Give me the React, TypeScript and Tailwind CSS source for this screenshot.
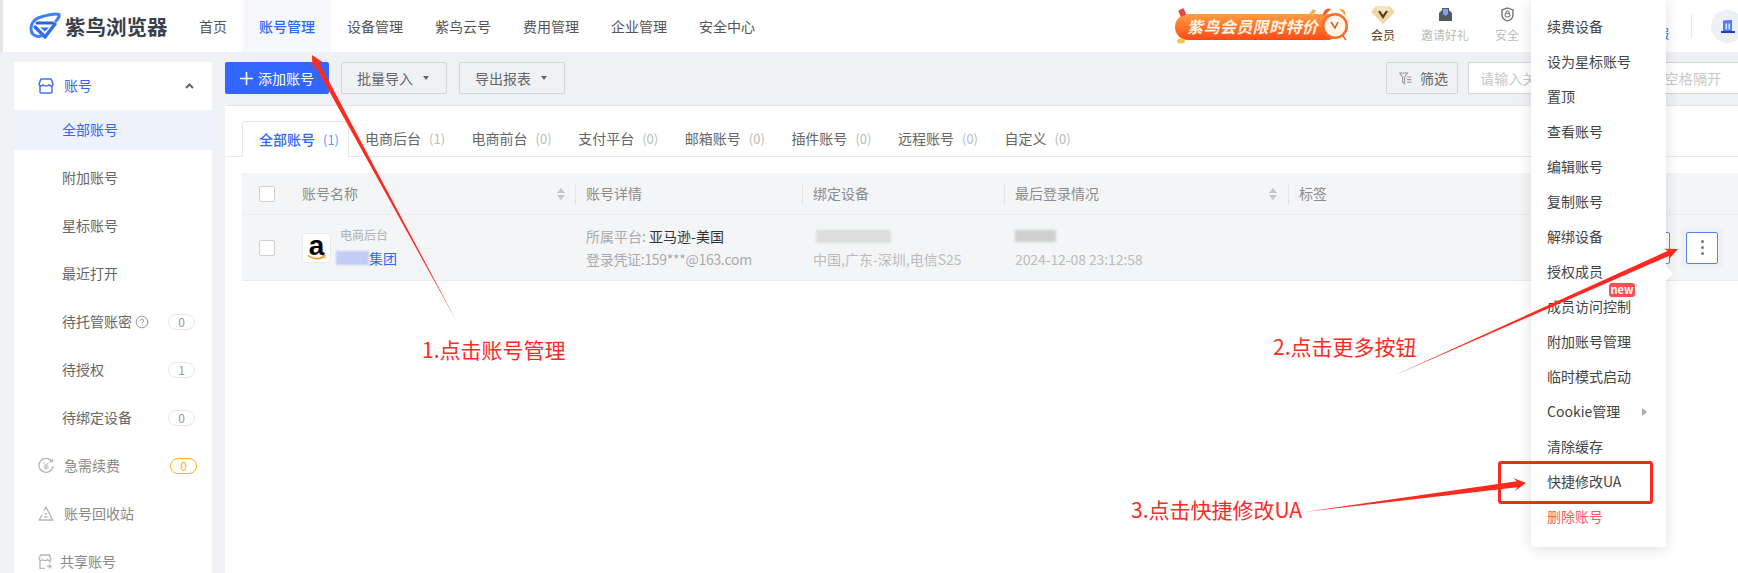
import React from "react";
import { CircleHelp } from "lucide-react";

const FONT = { fontFamily: '"Noto Sans CJK SC", "Noto Sans", sans-serif' };

function Logo() {
  return (
    <svg width="32" height="28" viewBox="0 0 32 28" fill="none" className="shrink-0">
      <path d="M3 21C0 14 4 7 12 5C19 3 26 1 30 2.5C31 5 29 7 27 9" stroke="#3b82f6" strokeWidth="3" strokeLinecap="round" />
      <path d="M8 11H24" stroke="#2563eb" strokeWidth="3" strokeLinecap="round" />
      <path d="M6 15L16 25L26 12" stroke="#2f6bf5" strokeWidth="3.4" strokeLinejoin="round" strokeLinecap="round" />
      <path d="M11 15.5H20L16 19.5Z" fill="#2f6bf5" />
      <path d="M3 21C5 24 9 25 12 24" stroke="#3b82f6" strokeWidth="3" strokeLinecap="round" />
    </svg>
  );
}

function Banner() {
  return (
    <div className="relative w-[177px] h-[34px] mt-[-1px] shrink-0">
      <svg width="177" height="42" viewBox="0 0 177 42" className="absolute left-0 top-[-4px]">
        <defs>
          <linearGradient id="pill" x1="0" y1="0" x2="0" y2="1">
            <stop offset="0" stopColor="#ff9d42" />
            <stop offset="1" stopColor="#ff4a17" />
          </linearGradient>
        </defs>
        <rect x="0" y="9" width="165" height="26" rx="13" fill="url(#pill)" />
        <rect x="4" y="4" width="6" height="7" rx="1" fill="#ef4444" transform="rotate(-25 7 7)" />
        <ellipse cx="6" cy="36" rx="4" ry="2.5" fill="#f8c34a" />
        <path d="M134 9l4-5 3 2-4 5z" fill="#f3b25a" />
        <path d="M148 9a6 6 0 0 1 8-5l-7 7z" fill="#ff5a26" />
        <path d="M171 10a6 6 0 0 0-7-6l7 7z" fill="#f7a92e" />
        <path d="M152 31l-3 4M168 31l3 4" stroke="#e8622a" strokeWidth="1.6" />
        <circle cx="160" cy="21" r="13" fill="#ff6a2a" />
        <circle cx="160" cy="21" r="10.5" fill="#fff6e8" />
        <path d="M156 17l4 6 3-6" stroke="#d9592a" strokeWidth="1.6" fill="none" />
      </svg>
      <span className="absolute left-[12px] top-[4px] text-[16px] leading-[26px] font-bold italic text-[#fff3df] tracking-[0.4px] whitespace-nowrap">
        紫鸟会员限时特价
      </span>
    </div>
  );
}

function HeaderIcon({ label, cls, width, children }: { label: string; cls: string; width: string; children: React.ReactNode }) {
  return (
    <div className={`flex flex-col items-center shrink-0 mb-[7px] ${width}`}>
      <div className="h-[24px] flex items-center justify-center">{children}</div>
      <span className={`text-[12px] leading-[16px] whitespace-nowrap ${cls}`}>{label}</span>
    </div>
  );
}

function Header() {
  const nav = ["首页", "账号管理", "设备管理", "紫鸟云号", "费用管理", "企业管理", "安全中心"];
  return (
    <header className="h-[52px] shrink-0 bg-white border-l-[3px] border-[#e6e6e6] flex items-stretch">
      <div className="flex items-center pl-[26px] w-[180px] shrink-0">
        <Logo />
        <span className="ml-[4px] text-[20.5px] leading-none font-bold text-[#3a3f4b] whitespace-nowrap">紫鸟浏览器</span>
      </div>
      <nav className="flex items-stretch">
        {nav.map((n, i) => (
          <div
            key={n}
            className={`px-4 flex items-center text-[14px] whitespace-nowrap ${i === 1 ? "bg-[#f7f8fc] text-[#3366ff] font-medium" : "text-[#555]"}`}
          >
            {n}
          </div>
        ))}
      </nav>
      <div className="ml-auto mr-[-6px] flex items-center shrink-0">
        <Banner />
        <div className="ml-[19px]">
          <HeaderIcon label="会员" cls="text-[#5a3a12]" width="w-[24px]">
            <svg width="24" height="18" viewBox="0 0 24 18">
              <path d="M5 0H19L24 6L12 18L0 6Z" fill="#efd7a8" />
              <path d="M5 0H19L17 6H7Z" fill="#f7e6c6" />
              <path d="M8 5L12 11L16 5" stroke="#5a3a12" strokeWidth="2.2" fill="none" />
            </svg>
          </HeaderIcon>
        </div>
        <div className="ml-[26px]">
          <HeaderIcon label="邀请好礼" cls="text-[#bbb]" width="w-[48px]">
            <svg width="15" height="15" viewBox="0 0 15 15">
              <path d="M1 6L4 3V1H11V3L14 6V14H1Z" fill="#555962" />
              <path d="M5 2H10V7L7.5 9L5 7Z" fill="#7d9dff" />
            </svg>
          </HeaderIcon>
        </div>
        <div className="ml-[26px]">
          <HeaderIcon label="安全" cls="text-[#bbb]" width="w-[24px]">
            <svg width="13" height="15" viewBox="0 0 13 15" fill="none">
              <path d="M6.5 1L12 3V8C12 11 9.5 13 6.5 14C3.5 13 1 11 1 8V3Z" stroke="#666b75" strokeWidth="1.3" />
              <rect x="4.2" y="6.2" width="4.6" height="3.6" rx="0.8" stroke="#666b75" />
              <path d="M5 6.2V5.2a1.5 1.5 0 0 1 3 0V6.2" stroke="#666b75" />
            </svg>
          </HeaderIcon>
        </div>
        <span className="ml-[126px] w-[24px] text-[12px] text-[#3366ff] mt-[15px] whitespace-nowrap">客服</span>
        <div className="ml-[22px] w-px h-[24px] bg-[#e8e8ec]" />
        <div className="ml-[19px] w-[33px] h-[33px] rounded-full bg-[#eef0f8] flex items-center justify-center shrink-0">
          <svg width="14" height="13" viewBox="0 0 14 13">
            <path d="M2 0.5L11 0V11H2Z" fill="#4c7dff" />
            <rect x="4.5" y="3.5" width="1.6" height="6" fill="#dfe8ff" />
            <rect x="7.5" y="3.5" width="1.6" height="6" fill="#dfe8ff" />
            <rect x="0" y="11" width="14" height="2" fill="#1e40c8" />
          </svg>
        </div>
      </div>
    </header>
  );
}

function Badge({ v, warn }: { v: string; warn?: boolean }) {
  return (
    <span
      className={`w-[27px] h-[16px] rounded-full border flex items-center justify-center text-[12px] leading-none ${warn ? "border-[#ffb020] text-[#ffb020]" : "border-[#e8e8e8] text-[#999]"}`}
    >
      {v}
    </span>
  );
}

function SubItem({ label, active, help, badge }: { label: string; active?: boolean; help?: boolean; badge?: string }) {
  return (
    <div className={`h-10 mb-2 pl-[48px] pr-[17px] flex items-center text-[14px] ${active ? "bg-[#eef2fd] text-[#3366ff]" : "text-[#666]"}`}>
      <span className="whitespace-nowrap mb-[2px]">{label}</span>
      {help && <CircleHelp size={14} strokeWidth={1.5} className="ml-[3px] text-[#888]" />}
      {badge && (
        <span className="ml-auto">
          <Badge v={badge} />
        </span>
      )}
    </div>
  );
}

function Sidebar() {
  return (
    <aside className="w-[198px] ml-[14px] bg-white shrink-0">
      <div className="h-12 pl-6 pr-[18px] flex items-center text-[14px] text-[#3366ff]">
        <svg width="16" height="16" viewBox="0 0 16 16" fill="none" stroke="#3f6fff" strokeWidth="1.5" strokeLinejoin="round">
          <path d="M3 1H13L15 6C15 8 12 8.5 10.8 6.8C10 8.5 6 8.5 5.2 6.8C4 8.5 1 8 1 6Z" />
          <path d="M2 8V14C2 14.6 2.4 15 3 15H13C13.6 15 14 14.6 14 14V8" />
        </svg>
        <span className="ml-[10px] mb-[2px]">账号</span>
        <svg width="9" height="6" viewBox="0 0 9 6" fill="none" className="ml-auto">
          <path d="M1 5L4.5 1.5L8 5" stroke="#666" strokeWidth="2" />
        </svg>
      </div>
      <SubItem label="全部账号" active />
      <SubItem label="附加账号" />
      <SubItem label="星标账号" />
      <SubItem label="最近打开" />
      <SubItem label="待托管账密" help badge="0" />
      <SubItem label="待授权" badge="1" />
      <SubItem label="待绑定设备" badge="0" />
      <div className="h-10 mb-2 pl-6 pr-[15px] flex items-center text-[14px] text-[#888]">
        <svg width="16" height="16" viewBox="0 0 16 16" fill="none" stroke="#b5b5b5" strokeWidth="1.3">
          <path d="M14 3.6A7 7 0 1 0 15 8" />
          <path d="M11.6 3.6H14.4V1" />
          <path d="M5.6 4.8L8 7.6L10.4 4.8M5.6 8H10.4M5.6 10H10.4M8 7.6V12" strokeWidth="1" />
        </svg>
        <span className="ml-[10px] mb-[2px]">急需续费</span>
        <span className="ml-auto">
          <Badge v="0" warn />
        </span>
      </div>
      <div className="h-10 mb-2 pl-6 flex items-center text-[14px] text-[#888]">
        <svg width="16" height="16" viewBox="0 0 16 16" fill="none" stroke="#b5b5b5" strokeWidth="1.3">
          <path d="M5.8 5L8 1.2L14.8 14H1.2L4 9" />
          <path d="M7 8H9M6.4 11H9.6" />
        </svg>
        <span className="ml-[10px] mb-[2px]">账号回收站</span>
      </div>
      <div className="h-10 pl-6 flex items-center text-[14px] text-[#888]">
        <svg width="14" height="16" viewBox="0 0 14 16" fill="none" stroke="#b5b5b5" strokeWidth="1.3">
          <path d="M2.5 1H11.5L13 5C13 6.6 10.5 7 9.6 5.6C9 7 5 7 4.4 5.6C3.5 7 1 6.6 1 5Z" />
          <path d="M2 7V14.4H7M12 7V9M9 12.4H13M11 10.4L13 12.4L11 14.4" />
        </svg>
        <span className="ml-[8px] mb-[2px]">共享账号</span>
      </div>
    </aside>
  );
}

function Caret() {
  return <span className="ml-[10px] w-0 h-0 border-x-[3.5px] border-x-transparent border-t-[4px] border-t-[#666]" />;
}

function Toolbar() {
  return (
    <div className="h-8 flex items-stretch shrink-0 text-[14px]">
      <button className="w-[104px] bg-[#3366ff] text-white rounded-[2px] flex items-center pl-[15px]">
        <svg width="13" height="13" viewBox="0 0 13 13" stroke="#fff" strokeWidth="1.6">
          <path d="M6.5 0V13M0 6.5H13" />
        </svg>
        <span className="ml-[5px]">添加账号</span>
      </button>
      <button className="ml-[12px] w-[106px] border border-[#d4d5d9] rounded-[2px] text-[#666] flex items-center pl-[15px]">
        批量导入
        <Caret />
      </button>
      <button className="ml-[12px] w-[106px] border border-[#d4d5d9] rounded-[2px] text-[#666] flex items-center pl-[15px]">
        导出报表
        <Caret />
      </button>
      <button className="ml-auto w-[72px] border border-[#d4d5d9] rounded-[2px] text-[#666] flex items-center pl-[12px]">
        <svg width="13" height="13" viewBox="0 0 13 13" fill="none" stroke="#999" strokeWidth="1.1">
          <path d="M0.6 1H8.5L5.6 5V11.6L3.6 10V5Z" />
          <path d="M8 5H12.4M8 7.6H12.4M8 10.2H12.4" />
        </svg>
        <span className="ml-[8px]">筛选</span>
      </button>
      <div className="ml-[10px] w-[270px] shrink-0 border border-r-0 border-[#d4d5d9] rounded-l-[2px] bg-white flex items-center pl-[11px] text-[#c8c8c8] tracking-[0.2px] whitespace-nowrap overflow-hidden">
        请输入关键词，多个关键词用空格隔开
      </div>
    </div>
  );
}

function Tabs() {
  const rest: [string, string][] = [
    ["电商后台", "1"],
    ["电商前台", "0"],
    ["支付平台", "0"],
    ["邮箱账号", "0"],
    ["插件账号", "0"],
    ["远程账号", "0"],
    ["自定义", "0"],
  ];
  return (
    <div className="h-[36px] border-b border-[#e8e8e8] pl-[17px] flex items-stretch text-[14px]">
      <div className="w-[107px] h-[36px] pl-4 flex items-center bg-white border border-b-0 border-[#e8e8e8] rounded-t-[3px] text-[#3366ff] font-medium whitespace-nowrap">
        全部账号
        <span className="ml-2 font-normal text-[#6f8fff] text-[13px]">(1)</span>
      </div>
      {rest.map(([t, c]) => (
        <div key={t} className="w-[106.6px] pl-4 flex items-center text-[#666] whitespace-nowrap">
          {t}
          <span className="ml-2 text-[#bbb] text-[13px]">({c})</span>
        </div>
      ))}
    </div>
  );
}

function Check() {
  return <span className="w-4 h-4 rounded-[2px] border border-[#cfcfcf] bg-white shrink-0" />;
}

function Sort() {
  return (
    <span className="flex flex-col gap-[2px] shrink-0">
      <span className="w-0 h-0 border-x-[4px] border-x-transparent border-b-[5px] border-b-[#c4c6ca]" />
      <span className="w-0 h-0 border-x-[4px] border-x-transparent border-t-[5px] border-t-[#c4c6ca]" />
    </span>
  );
}

function Head({ label, width, sort }: { label: string; width: string; sort?: boolean }) {
  return (
    <div className={`flex items-center shrink-0 ${width}`}>
      <span className="w-px h-[22px] bg-[#e3e5e8]" />
      <span className="ml-[10px] whitespace-nowrap">{label}</span>
      {sort && (
        <span className="ml-auto mr-[11px]">
          <Sort />
        </span>
      )}
    </div>
  );
}

function Amazon() {
  return (
    <div className="relative w-[29px] h-[30px] rounded-[3px] border border-[#eaeaea] bg-white shrink-0 flex justify-center overflow-hidden">
      <span className="text-[28px] leading-[24px] font-bold text-black" style={{ fontFamily: '"Liberation Sans", sans-serif' }}>
        a
      </span>
      <svg width="20" height="7" viewBox="0 0 20 7" fill="none" className="absolute left-[4px] bottom-[1px]">
        <path d="M1 1.5C6 5.5 13 5.5 17 2.5" stroke="#f79a1c" strokeWidth="1.6" />
        <path d="M15 1.5L18.4 1.4L17.6 4.6" stroke="#f79a1c" strokeWidth="1" />
      </svg>
    </div>
  );
}

function Table() {
  return (
    <div className="ml-[17px] mt-[16px]">
      <div className="h-[42px] bg-[#f4f5f7] border-b border-[#eceef1] flex items-center text-[14px] text-[#8c8c8c]">
        <div className="w-[333px] shrink-0 pl-[17px] pr-[10px] flex items-center">
          <Check />
          <span className="ml-[27px]">账号名称</span>
          <span className="ml-auto">
            <Sort />
          </span>
        </div>
        <Head label="账号详情" width="w-[227px]" />
        <Head label="绑定设备" width="w-[202px]" />
        <Head label="最后登录情况" width="w-[284px]" sort />
        <Head label="标签" width="w-[100px]" />
      </div>
      <div className="h-[66px] bg-[#f4f5f7] border-b border-[#e8eaed] flex items-center text-[14px]">
        <div className="w-[333px] shrink-0 pl-[17px] flex items-center">
          <Check />
          <span className="ml-[27px]">
            <Amazon />
          </span>
          <div className="ml-[9px] flex flex-col">
            <span className="text-[12px] leading-[16px] text-[#b0b0b0]">电商后台</span>
            <span className="mt-[5px] h-[20px] flex items-center text-[14px] text-[#3366ff]">
              <span className="w-[33px] h-[14px] ml-[-4px] bg-[#c3cbf7] blur-[1px]" />
              集团
            </span>
          </div>
        </div>
        <div className="w-[227px] shrink-0 pl-[11px] leading-[23px] whitespace-nowrap text-[#aaa]">
          <div>
            所属平台: <span className="text-[#333]">亚马逊-美国</span>
          </div>
          <div className="tracking-[-0.3px]">登录凭证:159***@163.com</div>
        </div>
        <div className="w-[202px] shrink-0 pl-[11px] whitespace-nowrap text-[#bbb] leading-[23px]">
          <div className="h-[23px] flex items-center">
            <span className="w-[75px] h-[13px] ml-[3px] bg-[#dcdcdc] blur-[1px]" />
          </div>
          <div>中国,广东-深圳,电信S25</div>
        </div>
        <div className="w-[284px] shrink-0 pl-[11px] whitespace-nowrap text-[#bbb] leading-[23px]">
          <div className="h-[23px] flex items-center">
            <span className="w-[41px] h-[12px] bg-[#cfcfcf] blur-[1px]" />
          </div>
          <div className="tracking-[-0.1px]">2024-12-08 23:12:58</div>
        </div>
        <div className="flex-1 flex items-center justify-end pr-[15px]">
          <span className="w-[30px] h-[32px] mr-[11px] border border-[#5b84f0] rounded-[2px] bg-white" />
          <div className="p-[5px] bg-[#f0f1f6] rounded-[4px]">
            <div className="w-[32px] h-[32px] bg-white border border-[#5b84f0] rounded-[2px] flex flex-col items-center justify-center gap-[3px]">
              <span className="w-[3px] h-[3px] rounded-full bg-[#777]" />
              <span className="w-[3px] h-[3px] rounded-full bg-[#777]" />
              <span className="w-[3px] h-[3px] rounded-full bg-[#777]" />
            </div>
          </div>
        </div>
      </div>
    </div>
  );
}

function Menu() {
  const items = ["续费设备", "设为星标账号", "置顶", "查看账号", "编辑账号", "复制账号", "解绑设备", "授权成员", "成员访问控制", "附加账号管理", "临时模式启动", "Cookie管理", "清除缓存", "快捷修改UA", "删除账号"];
  return (
    <div className="absolute left-[1531px] top-0 w-[135px] h-[547px] bg-white rounded-b-[3px] shadow-[0_2px_14px_rgba(0,0,0,0.13)] pt-[9px] text-[14px] text-[#444]">
      <span className="absolute left-[124px] top-[266px] w-[15px] h-[15px] rotate-45 bg-white" />
      {items.map((t) => (
        <div key={t} className={`relative h-[35px] pl-4 flex items-center whitespace-nowrap ${t === "删除账号" ? "text-[#ff5a5f]" : ""}`}>
          {t}
          {t === "成员访问控制" && (
            <span className="absolute left-[78px] top-[-6px] w-[26px] h-[14px] rounded-[3px] bg-[#ff4d52] text-white text-[11px] leading-[13px] font-bold text-center">new</span>
          )}
          {t === "Cookie管理" && (
            <span className="absolute left-[111px] top-[14px] w-0 h-0 border-y-[4.5px] border-y-transparent border-l-[5px] border-l-[#aaa]" />
          )}
        </div>
      ))}
    </div>
  );
}

function Notes() {
  return (
    <>
      <div className="absolute left-[1498px] top-[461px] w-[155px] h-[43px] border-[3px] border-[#ff2a1f] rounded-[3px]" />
      <svg width="1738" height="573" className="absolute left-0 top-0 pointer-events-none">
        <polygon fill="#ff2a1f" points="457,322 314.1,64.1 312.4,68.4 312,55 323,62.6 318.5,61.7" />
        <polygon fill="#ff2a1f" points="1393,376 1667.9,250.8 1663.7,248.8 1678,249 1668.5,259.8 1669.9,255.4" />
        <polygon fill="#ff2a1f" points="1304,512 1516.8,481.2 1513.3,478.1 1526,483 1514.9,491 1517.4,487.2" />
      </svg>
      <span className="absolute left-[422px] top-[334px] text-[21px] leading-[30px] text-[#ff2a1f] whitespace-nowrap">1.点击账号管理</span>
      <span className="absolute left-[1273px] top-[331px] text-[21px] leading-[30px] text-[#ff2a1f] whitespace-nowrap">2.点击更多按钮</span>
      <span className="absolute left-[1131px] top-[494px] text-[21px] leading-[30px] text-[#ff2a1f] whitespace-nowrap">3.点击快捷修改UA</span>
    </>
  );
}

export default function App() {
  return (
    <div className="relative w-[1738px] h-[573px] overflow-hidden bg-[#f0f1f5] flex flex-col" style={FONT}>
      <Header />
      <div className="flex flex-1 min-h-0 pt-[10px]">
        <Sidebar />
        <main className="ml-[13px] flex-1 min-w-0 flex flex-col">
          <Toolbar />
          <div className="mt-[11px] flex-1 bg-white border-t border-[#e6e7ea] pt-[15px]">
            <Tabs />
            <Table />
          </div>
        </main>
      </div>
      <Menu />
      <Notes />
    </div>
  );
}
